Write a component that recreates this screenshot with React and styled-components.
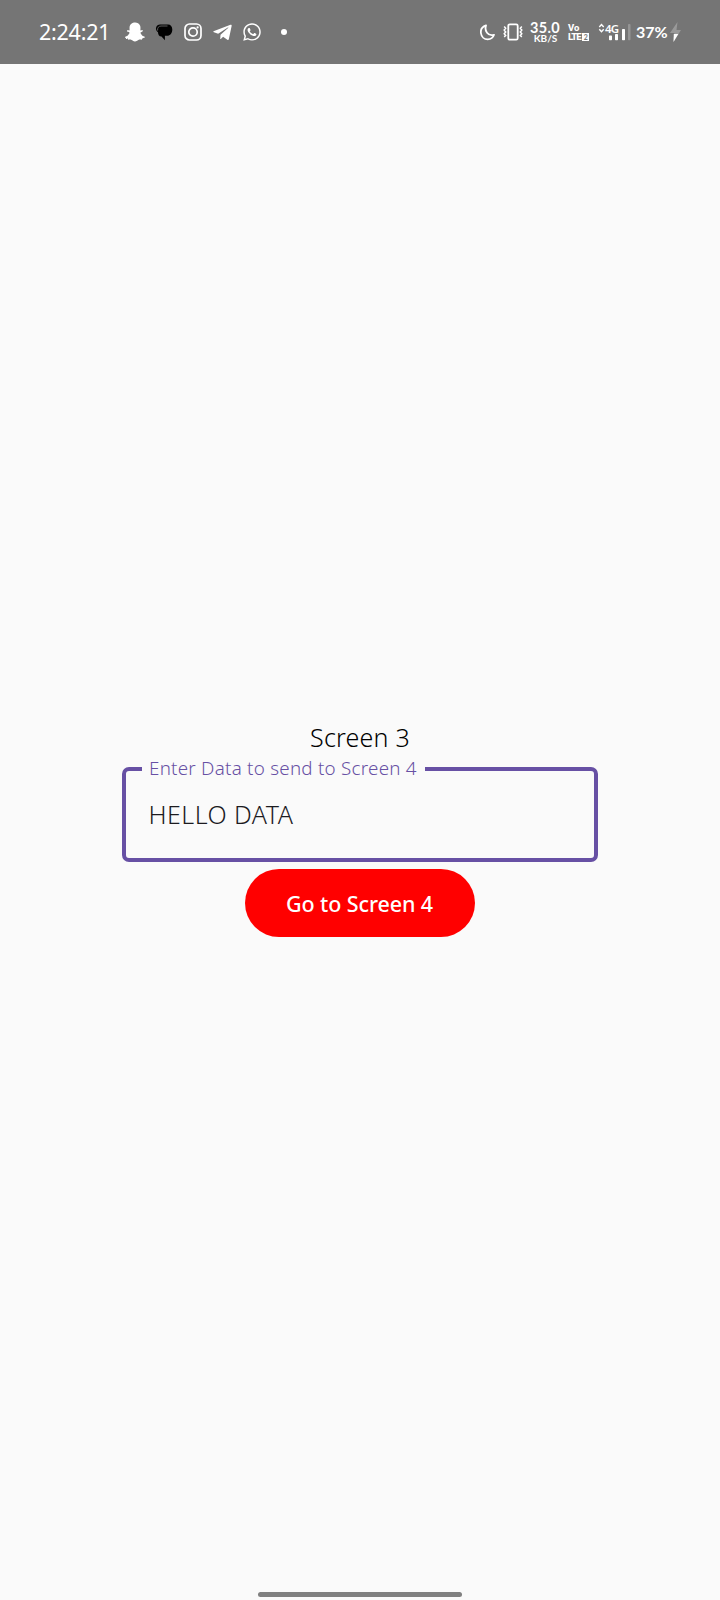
import React from "react";
import styled, { createGlobalStyle } from "styled-components";
import { FaSnapchatGhost, FaTelegramPlane, FaWhatsapp } from "react-icons/fa";

const GlobalStyle = createGlobalStyle`
  * { box-sizing: border-box; }
  body { margin: 0; background: #fafafa; font-family: "Noto Sans", sans-serif; }
`;

const Screen = styled.div`
  height: 1600px;
  display: flex;
  flex-direction: column;
  background: #fafafa;
`;

const StatusBar = styled.header`
  height: 64px;
  flex: none;
  display: flex;
  align-items: center;
  justify-content: space-between;
  padding: 0 39px 0 39px;
  background: #757575;
  color: #fff;
`;

const StatusGroup = styled.div`
  height: 22px;
  display: flex;
  align-items: center;
  white-space: nowrap;
`;

const Clock = styled.time`
  width: 71px;
  font: 400 21.5px/22px "Noto Sans", sans-serif;
  letter-spacing: -0.25px;
  margin-right: 15px;
`;

const Glyph = styled.span`
  flex: none;
  display: flex;
  justify-content: center;
  width: ${({ $w }) => $w}px;
  margin-right: ${({ $gap = 0 }) => $gap}px;
  svg { display: block; flex: none; }
`;

const Dot = styled.i`
  width: 6px;
  height: 6px;
  border-radius: 50%;
  background: #fff;
`;

const Stack = styled.div`
  display: flex;
  flex-direction: column;
  align-items: ${({ $align = "center" }) => $align};
  width: ${({ $w }) => $w}px;
  margin-right: ${({ $gap }) => $gap}px;
`;

const Speed = styled.span`
  font: 700 14.5px/11px Lato, sans-serif;
  letter-spacing: 0.3px;
`;

const Unit = styled.span`
  margin-left: 1px;
  font: 700 10px/10px Lato, sans-serif;
`;

const Volte = styled.span`
  display: flex;
  align-items: center;
  gap: 1.5px;
  font: 800 9.5px/9px Roboto, sans-serif;
  letter-spacing: ${({ $ls = 0 }) => $ls}px;
`;

const Sim = styled.b`
  width: 7px;
  height: 8px;
  background: #fff;
  color: #757575;
  font: 700 7px/8px Lato, sans-serif;
  text-align: center;
  letter-spacing: 0;
`;

const Signal = styled.div`
  position: relative;
  width: 34px;
  height: 18px;
  margin-right: 4px;
`;

const Network = styled.span`
  position: absolute;
  left: 7px;
  top: 0;
  font: 600 11.5px/11px "Noto Sans", sans-serif;
  letter-spacing: -0.8px;
`;

const Battery = styled.span`
  width: 32px;
  font: 700 16px/18px Lato, sans-serif;
  margin: 0 2px 1px 0;
`;

const Content = styled.main`
  flex: 1;
  display: flex;
  flex-direction: column;
  align-items: center;
  padding-top: 656px;
`;

const Title = styled.h1`
  margin: 0;
  height: 47px;
  font: 300 25px/34px "Noto Sans", sans-serif;
  letter-spacing: 0.2px;
  color: #000;
`;

const Field = styled.label`
  position: relative;
  display: flex;
  align-items: center;
  width: 476px;
  height: 95px;
  padding: 0 22.5px 1px;
  border: 4px solid #6750a4;
  border-radius: 7px;
`;

const FieldLabel = styled.span`
  position: absolute;
  left: 16px;
  top: -15px;
  width: 283px;
  padding-left: 7px;
  background: #fafafa;
  color: #6750a4;
  font: 300 18.8px/24px "Noto Sans", sans-serif;
  letter-spacing: 0.25px;
  white-space: nowrap;
`;

const Value = styled.span`
  font: 300 25px/34px "Noto Sans", sans-serif;
  letter-spacing: 0.45px;
  color: #1c1b1f;
`;

const Button = styled.button`
  width: 230px;
  height: 68px;
  margin-top: 7px;
  padding: 2px 1px 0 0;
  border: 0;
  border-radius: 34px;
  background: #f00;
  color: #fff;
  font: 500 21.5px/30px "Noto Sans", sans-serif;
  letter-spacing: -0.1px;
`;

const HomeIndicator = styled.div`
  align-self: center;
  flex: none;
  width: 204px;
  height: 5px;
  margin-bottom: 3px;
  border-radius: 3px;
  background: #808080;
`;

const MessageIcon = () => (
  <svg width="18" height="18" viewBox="0 0 18 18">
    <path d="M5 1.500h8c2.700 0 4.300 2 4.300 5 0 3.600-2 6.200-5.300 6.300H9.900V17.300L6.500 13.600C4 13.300 3 11.500 3 9.200 1.300 8 .5 6 1.200 4.200 1.900 2.400 3.100 1.500 5 1.500Z" fill="#000" />
    <path d="M2.600 7.500C2.300 4.800 3.500 3.100 6 3h6.500" fill="none" stroke="#757575" strokeWidth=".8" />
  </svg>
);

const InstagramIcon = () => (
  <svg width="18" height="18" viewBox="0 0 18 18" fill="none" stroke="#fff" strokeWidth="1.7">
    <rect x="1" y="1" width="16" height="16" rx="4.500" />
    <circle cx="9" cy="9" r="4.200" />
    <circle cx="13.600" cy="4.400" r="1.100" fill="#fff" stroke="none" />
  </svg>
);

const MoonIcon = () => (
  <svg width="16" height="17" viewBox="0 0 16 17" fill="none" stroke="#fff" strokeWidth="1.800" strokeLinejoin="round">
    <path d="M6 1.400C2.400 2.600.5 5.600.9 9c.5 3.900 3.400 6.300 6.800 6.300 3.100 0 5.400-1.700 6.300-4.500-3 .8-5.400.1-7-2C5.500 6.800 5.100 4.300 6 1.400Z" />
  </svg>
);

const VibrateIcon = () => (
  <svg width="20" height="18" viewBox="0 0 20 18" fill="none" stroke="#fff">
    <rect x="5.300" y="1.300" width="9.400" height="15.400" rx="1.500" strokeWidth="1.800" />
    <path d="m1.200 3.500 1.500 1.800-1.500 1.800 1.500 1.800-1.500 1.800 1.500 1.800-1.500 1.500M18.800 3.500l-1.500 1.800 1.500 1.800-1.500 1.800 1.500 1.800-1.500 1.800 1.500 1.500" strokeWidth="1.500" />
  </svg>
);

const BarsIcon = styled.svg`
  display: block;
`;

const SignalBars = () => (
  <BarsIcon width="34" height="18" viewBox="0 0 34 18" fill="#fff">
    <path d="m1.300 4 2.200-2.500L5.700 4M1.300 6.200l2.200 2.500 2.200-2.500" fill="none" stroke="#fff" strokeWidth="1.400" />
    <rect x="11" y="12.500" width="3" height="4.800" rx=".7" />
    <rect x="17" y="11" width="3" height="6.300" rx=".7" />
    <rect x="24" y="6" width="3" height="11.300" rx=".7" />
    <rect x="30" y="1" width="2.500" height="16.300" rx=".7" fill="#959595" />
  </BarsIcon>
);

const BoltIcon = () => (
  <svg width="11" height="20" viewBox="0 0 11 20">
    <path d="M7.500 0 0 11h4.300L3.500 20 11 8H6.500Z" fill="#999" />
    <path d="M3.800 12h4.500L3.500 20Z" fill="#fff" />
  </svg>
);

export default function App() {
  return (
    <Screen>
      <GlobalStyle />
      <StatusBar>
        <StatusGroup>
          <Clock>2:24:21</Clock>
          <Glyph $w={20} $gap={10}><FaSnapchatGhost size={20} /></Glyph>
          <Glyph $w={18} $gap={11}><MessageIcon /></Glyph>
          <Glyph $w={18} $gap={10}><InstagramIcon /></Glyph>
          <Glyph $w={21} $gap={10}><FaTelegramPlane size={21} /></Glyph>
          <Glyph $w={18} $gap={20}><FaWhatsapp size={20} /></Glyph>
          <Dot />
        </StatusGroup>
        <StatusGroup>
          <Glyph $w={16} $gap={7}><MoonIcon /></Glyph>
          <Glyph $w={20} $gap={6}><VibrateIcon /></Glyph>
          <Stack $w={32} $gap={7}>
            <Speed>35.0</Speed>
            <Unit>KB/S</Unit>
          </Stack>
          <Stack $w={22} $gap={8} $align="flex-start">
            <Volte>Vo</Volte>
            <Volte $ls={-0.9}>LTE<Sim>2</Sim></Volte>
          </Stack>
          <Signal>
            <Network>4G</Network>
            <SignalBars />
          </Signal>
          <Battery>37%</Battery>
          <Glyph $w={11}><BoltIcon /></Glyph>
        </StatusGroup>
      </StatusBar>
      <Content>
        <Title>Screen 3</Title>
        <Field>
          <FieldLabel>Enter Data to send to Screen 4</FieldLabel>
          <Value>HELLO DATA</Value>
        </Field>
        <Button>Go to Screen 4</Button>
      </Content>
      <HomeIndicator />
    </Screen>
  );
}
